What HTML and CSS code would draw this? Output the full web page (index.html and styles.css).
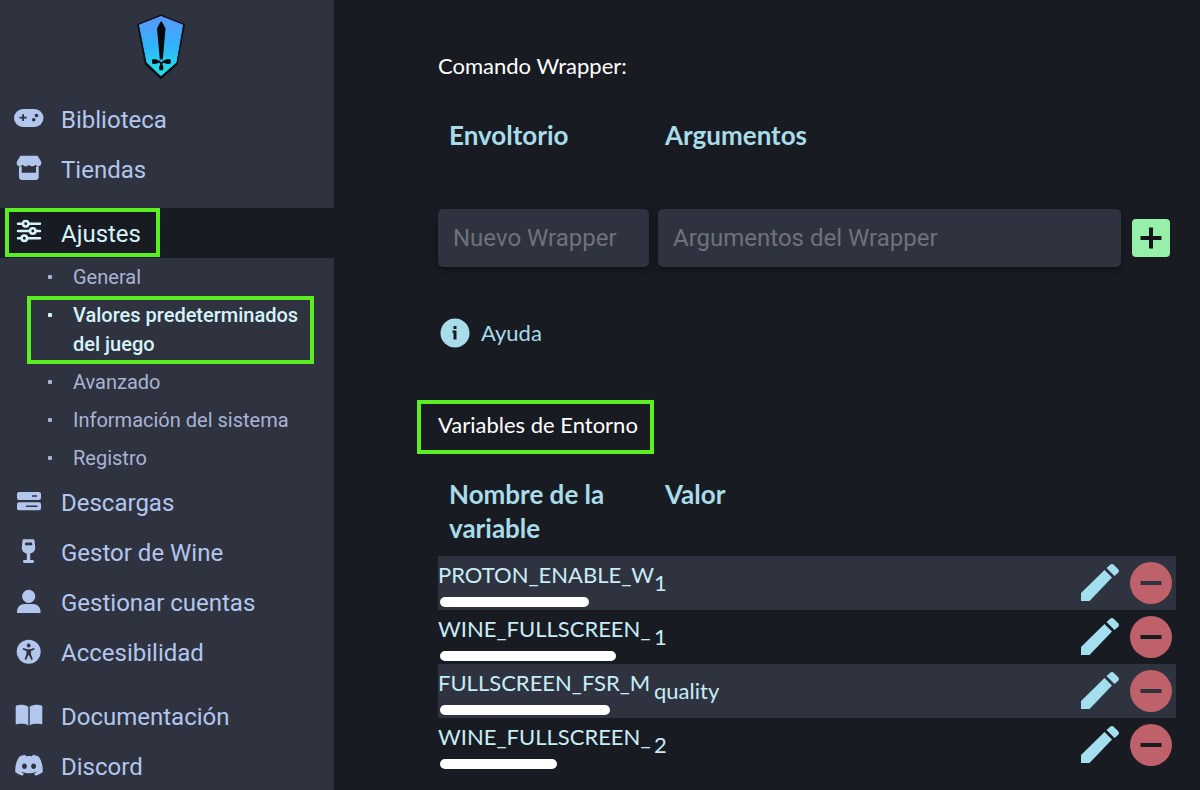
FILE: index.html
```html
<!DOCTYPE html>
<html lang="es">
<head>
<meta charset="utf-8">
<meta name="viewport" content="width=device-width, initial-scale=1">
<title>Valores predeterminados del juego</title>
<link rel="stylesheet" href="styles.css">
</head>
<body>

<nav class="sidebar">
  <svg class="logo" viewBox="0 0 50 67" aria-hidden="true">
    <defs>
      <linearGradient id="shield" x1="0" y1="0" x2="0" y2="1">
        <stop offset="0" stop-color="#5a97fb"/>
        <stop offset="0.5" stop-color="#2fb4fa"/>
        <stop offset="1" stop-color="#1fe6e6"/>
      </linearGradient>
    </defs>
    <path d="M25 2 48.5 11.500 41 51.500 25 66 9.500 51.500 1.500 11.500z" fill="#0b0f16" stroke="#0b0f16" stroke-linejoin="round"/>
    <path d="M25 3.500 46.500 12 40 49.500 25 62.500 11 49.500 3.500 12z" fill="url(#shield)" stroke="url(#shield)" stroke-linejoin="round"/>
    <path d="M25.300 8 27 10.500 29.500 15.500 26.800 46.500H23.800L21 15.500 23.500 10.500z" fill="#06080c"/>
    <path d="M16 46.500 19 46 24 48 25.300 49.500 26.600 48 31.500 46 34.700 46.500V50.500L31.500 51 27 49.800 26.300 51 27.500 54.500 27 57.300H23.500L23 54.500 24.300 51 23.500 49.800 19 51 16 50.500z" fill="#06080c"/>
  </svg>

  <ul class="menu">
    <li>
      <a href="#biblioteca">
        <svg class="icon" viewBox="0 0 30 28"><rect y="4" width="29.500" height="18" rx="9"/><path class="cut" d="M8.200 9.300h1.800v2.500h2.700v1.800H10v2.500H8.200v-2.500H5.500v-1.800h2.700z"/><circle class="cut" cx="22.500" cy="10.500" r="1.800"/><circle class="cut" cx="19.700" cy="14.800" r="1.800"/></svg>
        Biblioteca
      </a>
    </li>
    <li>
      <a href="#tiendas">
        <svg class="icon" viewBox="0 0 30 28"><path d="M6.500.7h17L26.800 6c1.300 2.500 0 5-2.300 5.200-1.400 0-2.300-.6-3.200-1.500-1.500 2-4.500 2-6.300 0-1.800 2-4.800 2-6.300 0-.9.900-1.800 1.500-3.200 1.500C3.200 11 1.900 8.500 3.200 6z"/><path d="M5 11.500h2.700v6.200H22v-6.200h2.700V22a3 3 0 0 1-3 3H8a3 3 0 0 1-3-3z"/></svg>
        Tiendas
      </a>
    </li>
  </ul>

  <ul class="menu">
    <li>
      <a class="active marked" href="#ajustes">
        <svg class="icon sliders" viewBox="0 0 30 28"><path d="M4 4.700h4.500M15 4.700h11M4 12h11.500M22 12h4M4 19.300h3M13.500 19.300H26"/><circle cx="11.700" cy="4.700" r="2.700"/><circle cx="18.800" cy="12" r="2.700"/><circle cx="10.300" cy="19.300" r="2.700"/></svg>
        Ajustes
      </a>
      <ul class="submenu">
        <li><a href="#general">General</a></li>
        <li><a class="current marked" href="#juego">Valores predeterminados del juego</a></li>
        <li><a href="#avanzado">Avanzado</a></li>
        <li><a href="#sistema">Información del sistema</a></li>
        <li><a href="#registro">Registro</a></li>
      </ul>
    </li>
    <li>
      <a href="#descargas">
        <svg class="icon" viewBox="0 0 30 28"><rect x="3" y="4" width="24" height="8" rx="2"/><rect x="3" y="14.300" width="24" height="8" rx="2"/><path class="cut" d="M18 7.300h5v1.500h-5zM12 17.400h11.500v1.500H12z"/></svg>
        Descargas
      </a>
    </li>
    <li>
      <a href="#wine">
        <svg class="icon" viewBox="0 0 30 28"><path d="M10 1.300h9c.9 0 1.400.5 1.500 1.300l.7 6.400c.2 3.600-2 6-5 6.600v6.400h2.300c1 0 1.500.7 1.500 1.500s-.5 1.500-1.500 1.500h-8c-1 0-1.500-.7-1.500-1.500s.5-1.500 1.500-1.500h2.300v-6.400c-3-.6-5.300-3-5-6.600l.7-6.400c.1-.8.600-1.300 1.500-1.300z"/><path class="cut" d="M11.200 4.400h6.800l.4 2.800h-7.500z"/></svg>
        Gestor de Wine
      </a>
    </li>
    <li>
      <a href="#cuentas">
        <svg class="icon" viewBox="0 0 30 28"><circle cx="14.700" cy="8.300" r="6.600"/><path d="M3 25v-1.500C3 19 6.500 16 10.500 16h8.500c4 0 7.500 3 7.500 7.500V25z"/></svg>
        Gestionar cuentas
      </a>
    </li>
    <li>
      <a href="#accesibilidad">
        <svg class="icon" viewBox="0 0 30 28"><circle cx="14.700" cy="13.700" r="12"/><circle class="cut" cx="14.700" cy="7.500" r="1.900"/><path class="cut" d="M9.200 10.100 13.300 11.300h2.800l4.100-1.200.5 1.500-3.700 1.500v3.200l1.800 5-1.500.7-2.200-4.700h-.8l-2.200 4.700-1.500-.7 1.800-5v-3.200l-3.700-1.500z"/></svg>
        Accesibilidad
      </a>
    </li>
  </ul>

  <ul class="menu">
    <li>
      <a href="#documentacion">
        <svg class="icon" viewBox="0 0 30 28"><path d="M14.300 4.800v18.600C11 21.700 6.500 21.500 2.800 22.300c-.7.100-1.100-.3-1.100-.9V4.500c0-.5.300-.9.800-1.100 3.800-1 8.500-.7 11.800 1.400zM15.700 4.800v18.600c3.300-1.700 7.800-1.900 11.500-1.100.7.100 1.100-.3 1.100-.9V4.500c0-.5-.3-.9-.8-1.100-3.800-1-8.500-.7-11.800 1.400z"/></svg>
        Documentación
      </a>
    </li>
    <li>
      <a href="#discord">
        <svg class="icon" viewBox="0 -26 640 597"><path d="M524.531,69.836a1.5,1.5,0,0,0-.764-.7A485.065,485.065,0,0,0,404.081,32.03a1.816,1.816,0,0,0-1.923.91,337.461,337.461,0,0,0-14.9,30.6,447.848,447.848,0,0,0-134.426,0,309.541,309.541,0,0,0-15.135-30.6,1.89,1.89,0,0,0-1.924-.91A483.689,483.689,0,0,0,116.085,69.137a1.712,1.712,0,0,0-.788.676C39.068,183.651,18.186,294.69,28.43,404.354a2.016,2.016,0,0,0,.765,1.375A487.666,487.666,0,0,0,176.02,479.918a1.9,1.9,0,0,0,2.063-.676A348.2,348.2,0,0,0,208.12,430.4a1.86,1.86,0,0,0-1.019-2.588,321.173,321.173,0,0,1-45.868-21.853,1.885,1.885,0,0,1-.185-3.126c3.082-2.309,6.166-4.711,9.109-7.137a1.819,1.819,0,0,1,1.9-.256c96.229,43.917,200.41,43.917,295.5,0a1.812,1.812,0,0,1,1.924.233c2.944,2.426,6.027,4.851,9.132,7.16a1.884,1.884,0,0,1-.162,3.126,301.407,301.407,0,0,1-45.89,21.83,1.875,1.875,0,0,0-1,2.611,391.055,391.055,0,0,0,30.014,48.815,1.864,1.864,0,0,0,2.063.7A486.048,486.048,0,0,0,610.7,405.729a1.882,1.882,0,0,0,.765-1.352C623.729,277.594,590.933,167.465,524.531,69.836ZM222.491,337.58c-28.972,0-52.844-26.587-52.844-59.239S193.056,219.1,222.491,219.1c29.665,0,53.306,26.82,52.843,59.239C275.334,310.993,251.924,337.58,222.491,337.58Zm195.38,0c-28.971,0-52.843-26.587-52.843-59.239S388.437,219.1,417.871,219.1c29.667,0,53.307,26.82,52.844,59.239C470.715,310.993,447.538,337.58,417.871,337.58Z"/></svg>
        Discord
      </a>
    </li>
  </ul>
</nav>

<main class="content">
  <h2>Comando Wrapper:</h2>
  <table class="vars">
    <thead>
      <tr><th class="name">Envoltorio</th><th>Argumentos</th></tr>
    </thead>
  </table>
  <form class="wrapper-form">
    <input class="wrapper-name" type="text" placeholder="Nuevo Wrapper" aria-label="Nuevo Wrapper">
    <input class="wrapper-args" type="text" placeholder="Argumentos del Wrapper" aria-label="Argumentos del Wrapper">
    <button class="add" type="button" aria-label="Añadir">
      <svg viewBox="0 0 38 38"><path d="M17 8.500h4V17h8.500v4H21v8.500h-4V21H8.500v-4H17z"/></svg>
    </button>
  </form>

  <a class="help" href="#ayuda">
    <svg viewBox="0 0 30 30"><circle cx="15" cy="15" r="14.500"/><rect class="cut" x="13.500" y="8" width="3" height="3"/><path class="cut" d="M12.500 12.500h4v9h-3v-6.700h-1z"/></svg>
    Ayuda
  </a>

  <h2><span class="marked">Variables de Entorno</span></h2>
  <table class="vars">
    <thead>
      <tr><th class="name">Nombre de la variable</th><th>Valor</th><th class="actions"></th></tr>
    </thead>
    <tbody>
      <tr>
        <td class="name"><div class="key">PROTON_ENABLE_W</div><div class="bar" style="width: 149px"></div></td>
        <td>1</td>
        <td class="actions"><div class="buttons">
          <button class="edit" type="button" aria-label="Editar"><svg viewBox="0 0 40 40"><path d="M1 30 24.500 7 32 14.500 9.500 38H1zM26.500 5 30.500 1.500Q32 .5 33.500 1.500L38.500 6.500Q39.500 8 38.500 9.500L34.500 13z"/></svg></button>
          <button class="remove" type="button" aria-label="Eliminar"><svg viewBox="0 0 42 42"><path fill-rule="evenodd" d="M21 0a21 21 0 1 0 0 42a21 21 0 1 0 0-42zM10.500 19h21v4h-21z"/></svg></button>
        </div></td>
      </tr>
      <tr>
        <td class="name"><div class="key">WINE_FULLSCREEN_</div><div class="bar" style="width: 176px"></div></td>
        <td>1</td>
        <td class="actions"><div class="buttons">
          <button class="edit" type="button" aria-label="Editar"><svg viewBox="0 0 40 40"><path d="M1 30 24.500 7 32 14.500 9.500 38H1zM26.500 5 30.500 1.500Q32 .5 33.500 1.500L38.500 6.500Q39.500 8 38.500 9.500L34.500 13z"/></svg></button>
          <button class="remove" type="button" aria-label="Eliminar"><svg viewBox="0 0 42 42"><path fill-rule="evenodd" d="M21 0a21 21 0 1 0 0 42a21 21 0 1 0 0-42zM10.500 19h21v4h-21z"/></svg></button>
        </div></td>
      </tr>
      <tr>
        <td class="name"><div class="key">FULLSCREEN_FSR_M</div><div class="bar" style="width: 170px"></div></td>
        <td>quality</td>
        <td class="actions"><div class="buttons">
          <button class="edit" type="button" aria-label="Editar"><svg viewBox="0 0 40 40"><path d="M1 30 24.500 7 32 14.500 9.500 38H1zM26.500 5 30.500 1.500Q32 .5 33.500 1.500L38.500 6.500Q39.500 8 38.500 9.500L34.500 13z"/></svg></button>
          <button class="remove" type="button" aria-label="Eliminar"><svg viewBox="0 0 42 42"><path fill-rule="evenodd" d="M21 0a21 21 0 1 0 0 42a21 21 0 1 0 0-42zM10.500 19h21v4h-21z"/></svg></button>
        </div></td>
      </tr>
      <tr>
        <td class="name"><div class="key">WINE_FULLSCREEN_</div><div class="bar" style="width: 117px"></div></td>
        <td>2</td>
        <td class="actions"><div class="buttons">
          <button class="edit" type="button" aria-label="Editar"><svg viewBox="0 0 40 40"><path d="M1 30 24.500 7 32 14.500 9.500 38H1zM26.500 5 30.500 1.500Q32 .5 33.500 1.500L38.500 6.500Q39.500 8 38.500 9.500L34.500 13z"/></svg></button>
          <button class="remove" type="button" aria-label="Eliminar"><svg viewBox="0 0 42 42"><path fill-rule="evenodd" d="M21 0a21 21 0 1 0 0 42a21 21 0 1 0 0-42zM10.500 19h21v4h-21z"/></svg></button>
        </div></td>
      </tr>
    </tbody>
  </table>
</main>

</body>
</html>
```
FILE: styles.css
```css
* {
  box-sizing: border-box;
}

body {
  display: flex;
  height: 100vh;
  margin: 0;
  overflow: hidden;
  background: #191b23;
  color: #fff;
  font-family: Lato, sans-serif;
  font-size: 22px;
}

a {
  color: inherit;
  text-decoration: none;
}

ul {
  margin: 0;
  padding: 0;
  list-style: none;
}

svg {
  display: block;
  fill: currentColor;
}

/* Sidebar */
.sidebar {
  flex: 0 0 334px;
  padding-top: 13px;
  background: #2e333f;
  color: #b3c6ed;
  font-family: Roboto, sans-serif;
}

.logo {
  width: 50px;
  height: 67px;
  margin: 0 0 14px 136px;
}

.menu {
  margin-bottom: 14px;
  font-size: 24px;
}

.menu > li > a {
  display: flex;
  align-items: center;
  gap: 17px;
  height: 50px;
  padding: 2px 0 0 14px;
}

.icon {
  width: 30px;
  height: 28px;
  margin-bottom: 2px;
}

.icon .cut {
  fill: #2e333f;
}

.sliders {
  fill: none;
  stroke: currentColor;
  stroke-width: 2.5;
  stroke-linecap: round;
}

.menu .active {
  background: #191b23;
  color: #d6f3fb;
}

.submenu {
  color: #a9b4d4;
  font-size: 20px;
  line-height: 29px;
}

.submenu a {
  display: block;
  padding: 5px 30px 4px 73px;
}

.submenu a:before {
  float: left;
  width: 4px;
  height: 4px;
  margin: 12px 0 0 -25px;
  border-radius: 1px;
  background: currentColor;
  content: "";
}

.submenu .current {
  color: #d6f3fb;
  font-weight: 500;
}

/* Green frames round the highlighted entries */
.marked {
  position: relative;
}

.marked:after {
  position: absolute;
  border: 4px solid #5bee20;
  content: "";
}

.active.marked:after {
  top: 0;
  bottom: 1px;
  left: 5px;
  width: 147px;
}

.current.marked:after {
  inset: 0 20px -1px 27px;
}

h2 .marked:after {
  inset: -10px -16px -14px -21px;
}

/* Settings */
.content {
  flex: 1;
  min-width: 0;
  padding: 51px 24px 0 104px;
}

h2 {
  margin: 0 0 26px;
  font-size: 22px;
  font-weight: 400;
  line-height: 30px;
}

h2 .marked {
  display: inline-block;
}

.vars {
  width: 100%;
  border-collapse: collapse;
  table-layout: fixed;
}

.vars th {
  padding: 11px;
  color: #a8dce9;
  font-size: 26px;
  font-weight: 700;
  line-height: 34px;
  text-align: left;
  vertical-align: top;
}

.vars .name {
  width: 216px;
}

.vars .actions {
  width: 100px;
}

.vars td {
  height: 54px;
  padding: 0;
  color: #c8edf7;
  line-height: 28px;
}

.vars tbody tr:nth-child(odd) {
  background: #2e333f;
}

.key {
  overflow: hidden;
  padding-top: 4px;
  white-space: nowrap;
}

.bar {
  height: 10px;
  margin: 8px 0 2px 2px;
  border-radius: 5px;
  background: #fff;
}

.buttons {
  display: flex;
  align-items: center;
  justify-content: flex-end;
  gap: 10px;
  padding-right: 4px;
}

button {
  flex: none;
  padding: 0;
  border: 0;
  background: none;
}

.edit {
  width: 40px;
  color: #a3dfee;
}

.remove {
  width: 42px;
  color: #bf616a;
}

.wrapper-form {
  display: flex;
  align-items: center;
  margin: 46px 6px 51px 0;
}

.wrapper-form input {
  height: 58px;
  padding: 0 15px;
  border: 0;
  border-radius: 5px;
  background: #2e333f;
  box-shadow: 0 3px 6px rgba(0, 0, 0, 0.4);
  color: #fff;
  font: 24px Roboto, sans-serif;
}

.wrapper-form input::placeholder {
  color: #6f727a;
}

.wrapper-name {
  width: 211px;
  margin-right: 9px;
}

.wrapper-args {
  flex: 1;
  min-width: 0;
  margin-right: 11px;
}

.add {
  width: 38px;
  border-radius: 4px;
  background: #96f0a9;
  color: #14161c;
}

.help {
  display: flex;
  align-items: center;
  gap: 11px;
  width: 140px;
  margin-bottom: 62px;
  padding-left: 2px;
  color: #a8dce9;
  line-height: 30px;
}

.help svg {
  width: 30px;
  height: 30px;
}

.help .cut {
  fill: #191b23;
}
```
